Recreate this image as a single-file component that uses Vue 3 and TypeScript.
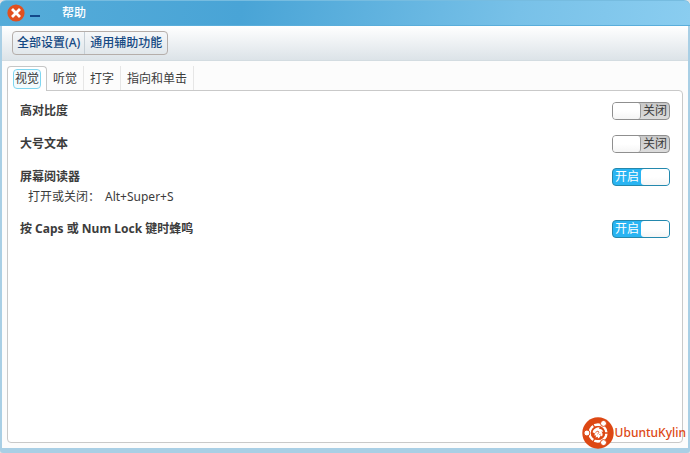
<script setup lang="ts">
import { ref } from 'vue'

interface Option {
  id: string
  label: string
  on: boolean
  hint?: { name: string; keys: string }
}

const tabs: string[] = ['视觉', '听觉', '打字', '指向和单击']
const active = ref(0)

const options = ref<Option[]>([
  { id: 'contrast', label: '高对比度', on: false },
  { id: 'large-text', label: '大号文本', on: false },
  { id: 'reader', label: '屏幕阅读器', on: true, hint: { name: '打开或关闭：', keys: 'Alt+Super+S' } },
  { id: 'beep', label: '按 Caps 或 Num Lock 键时蜂鸣', on: true },
])
</script>

<template>
  <div class="window">
    <header class="titlebar">
      <button class="close" type="button" aria-label="关闭窗口">
        <svg viewBox="0 0 18 18" width="18" height="18">
          <circle cx="9" cy="9" r="8.6" fill="#e2501f" />
          <path d="M6 6l6 6M12 6l-6 6" stroke="#fff" stroke-width="2.8" stroke-linecap="square" />
        </svg>
      </button>
      <button class="minimize" type="button" aria-label="最小化"><span class="dash"></span></button>
      <h1 class="title">帮助</h1>
    </header>

    <nav class="toolbar">
      <div class="group">
        <button class="tool" type="button">全部设置(A)</button>
        <button class="tool" type="button">通用辅助功能</button>
      </div>
    </nav>

    <main class="content">
      <div class="tabs" role="tablist">
        <button
          v-for="(tab, i) in tabs"
          :key="tab"
          type="button"
          role="tab"
          class="tab"
          :class="{ active: i === active }"
          :aria-selected="i === active"
          @click="active = i"
        >
          <span class="tab-text">{{ tab }}</span>
        </button>
      </div>

      <section class="panel">
        <div v-for="option in options" :key="option.id" class="option">
          <div class="row">
            <label class="name" :for="option.id">{{ option.label }}</label>
            <span class="switch" :class="{ on: option.on }">
              <span class="state">{{ option.on ? '开启' : '关闭' }}</span>
              <span class="knob"></span>
              <input :id="option.id" v-model="option.on" class="check" type="checkbox" role="switch" />
            </span>
          </div>
          <p v-if="option.hint" class="hint">
            <span>{{ option.hint.name }}</span>
            <span>{{ option.hint.keys }}</span>
          </p>
        </div>
      </section>
    </main>

    <div class="brand">
      <svg viewBox="0 0 32 32" width="32" height="32" aria-hidden="true">
        <circle cx="16" cy="16" r="15.7" fill="#dd4814" />
        <circle cx="16" cy="16" r="8.4" fill="none" stroke="#fff" stroke-width="2.6" />
        <path d="M16 16L27 16M16 16L10.5 6.5M16 16L10.5 25.5" stroke="#dd4814" stroke-width="1.3" />
        <g fill="#fff" stroke="#dd4814" stroke-width="1">
          <circle cx="4.9" cy="16" r="3" />
          <circle cx="21.5" cy="6.4" r="3" />
          <circle cx="21.5" cy="25.6" r="3" />
        </g>
        <circle cx="16" cy="16" r="7.1" fill="#dd4814" />
        <path
          d="M10.6 15.2c.4-2.4 2.4-4 4.6-4.6l2.4-.4-.6 1.6c2 0 3.6 1.2 4.3 3l-2-.4c1.6 1.4 1.6 3.6.6 5.2l-1.3-1.3c-.2 1.6-1.2 2.8-2.8 3.3l.1-1.8-2.4.8.7-2.1-2.3-.2 1.5-1.6z"
          fill="#fff"
        />
        <path d="M13.4 15.4l2.6-1.4 1 1.5-1.6 1.6M17.4 18l1.2-1.2" fill="none" stroke="#dd4814" stroke-width=".8" />
      </svg>
      <span class="brand-name">UbuntuKylin</span>
    </div>
  </div>
</template>

<style>
body {
  margin: 0;
  background: #e4e4e4;
}
</style>

<style scoped>
.window {
  position: relative;
  box-sizing: border-box;
  display: flex;
  flex-direction: column;
  min-height: 100vh;
  border: solid #a9cfe5;
  border-width: 0 2px 5px;
  border-radius: 6px 6px 3px 3px;
  background: #fcfcfc;
  color: #3c3c3c;
  font: 12px/18px "Noto Sans", "Noto Sans CJK SC", sans-serif;
}

button {
  margin: 0;
  padding: 0;
  border: 0;
  background: none;
  color: inherit;
  font: inherit;
}

.titlebar {
  display: flex;
  align-items: center;
  box-sizing: border-box;
  height: 26px;
  margin: 0 -2px;
  padding-left: 7px;
  border-top: 1px solid #76bce0;
  border-bottom: 1px solid #5aaedb;
  border-radius: 6px 6px 0 0;
  background: linear-gradient(100deg, #55acd9 0%, #49a4d6 35%, #78c1e8 75%, #8acdf0 100%);
}

.close {
  display: flex;
}

.minimize {
  display: flex;
  align-items: flex-end;
  height: 8px;
  margin-left: 5px;
}

.dash {
  width: 10px;
  height: 2px;
  background: #13498a;
}

.title {
  margin: 0 0 0 22px;
  color: #fff;
  font-size: 12px;
  font-weight: 500;
}

.toolbar {
  display: flex;
  align-items: center;
  box-sizing: border-box;
  height: 35px;
  padding: 0 10px;
  border-bottom: 1px solid #d3dce1;
  background: linear-gradient(#fff, #dce3e8);
}

.group {
  display: flex;
  border: 1px solid #b5aeaa;
  border-radius: 4px;
  background: linear-gradient(#f5f7f9, #e1e7eb);
}

.tool {
  height: 22px;
  padding: 0 4px;
  color: #164a84;
  font-weight: 500;
}

.tool + .tool {
  padding: 0 5px;
  border-left: 1px solid #c5ced5;
}

.content {
  flex: 1;
  display: flex;
  flex-direction: column;
  padding: 5px 5px;
}

.tabs {
  display: flex;
  align-items: flex-end;
}

.tab {
  height: 24px;
  padding: 2px 6px 0 6px;
  border-right: 1px solid #e6e6e6;
}

.tab.active {
  position: relative;
  z-index: 1;
  height: 25px;
  margin-bottom: -1px;
  padding: 0 5px;
  border: 1px solid #c6c6c6;
  border-bottom: 0;
  border-radius: 4px 4px 0 0;
  background: #fff;
}

.active .tab-text {
  display: block;
  padding: 0 1px;
  border: 1px solid #7fd6f0;
  border-radius: 4px;
  background: #f3fbfe;
}

.panel {
  flex: 1;
  display: flex;
  flex-direction: column;
  gap: 15px;
  padding: 11px 12px;
  border: 1px solid #c9c9c9;
  border-radius: 0 4px 4px 4px;
  background: #fff;
}

.row {
  display: flex;
  align-items: center;
  justify-content: space-between;
}

.name {
  font-size: 12px;
  font-weight: 700;
}

.switch {
  position: relative;
  display: flex;
  flex-direction: row-reverse;
  box-sizing: border-box;
  width: 58px;
  height: 18px;
  border: 1px solid #8f8f8f;
  border-radius: 4px;
  background: linear-gradient(#c8c8c8, #dcdcdc);
}

.state {
  flex: 1;
  line-height: 16px;
  text-align: center;
}

.knob {
  box-sizing: border-box;
  width: 28px;
  border-right: 1px solid #999;
  border-radius: 3px;
  background: linear-gradient(#fff 50%, #f5f5f5);
}

.switch.on {
  flex-direction: row;
  border-color: #2488ad;
  background: #29b4f2;
  color: #fff;
}

.on .knob {
  border-right: 0;
}

.check {
  position: absolute;
  inset: 0;
  width: 100%;
  height: 100%;
  margin: 0;
  opacity: 0;
}

.hint {
  display: flex;
  gap: 5px;
  margin: 3px 0 0 8px;
  font-size: 12px;
  line-height: 16px;
}

.brand {
  position: absolute;
  right: 2px;
  bottom: -1px;
  display: flex;
  align-items: center;
  gap: 1px;
  color: #dd4814;
}

.brand-name {
  font-size: 12px;
  font-weight: 500;
  line-height: 16px;
}
</style>
